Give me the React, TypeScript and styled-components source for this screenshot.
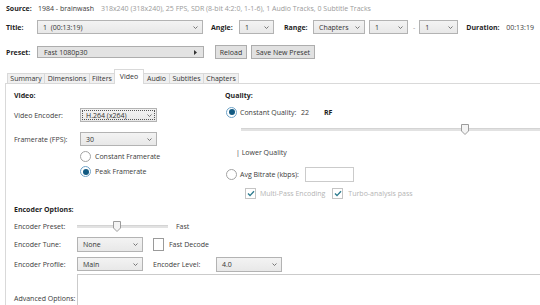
import React from "react";
import styled, { createGlobalStyle } from "styled-components";

const GlobalStyle = createGlobalStyle`
  html, body { margin: 0; padding: 0; background: #ffffff; }
  body { font-family: "Open Sans", "Noto Sans", sans-serif; }
  #root { width: 540px; height: 305px; }
`;

const Window = styled.div`
  width: 540px;
  height: 305px;
  overflow: hidden;
  background: #ffffff;
  display: flex;
  flex-direction: column;
  font-family: "Open Sans", "Noto Sans", sans-serif;
  font-size: 7px;
  line-height: 1;
  color: #3a3a3a;
`;

const HeaderRow = styled.div<{ $h: number; $mt?: number }>`
  display: flex;
  align-items: center;
  flex-shrink: 0;
  height: ${(p) => p.$h}px;
  margin-top: ${(p) => p.$mt ?? 0}px;
  padding-left: 6px;
  white-space: nowrap;
`;

const Strong = styled.span<{ $w?: number; $ml?: number }>`
  font-weight: 700;
  color: #1f1f1f;
  flex-shrink: 0;
  width: ${(p) => (p.$w ? `${p.$w}px` : "auto")};
  margin-left: ${(p) => p.$ml ?? 0}px;
`;

const Text = styled.span<{ $ml?: number; $w?: number; $muted?: boolean; $dim?: boolean }>`
  flex-shrink: 0;
  margin-left: ${(p) => p.$ml ?? 0}px;
  width: ${(p) => (p.$w ? `${p.$w}px` : "auto")};
  color: ${(p) => (p.$muted ? "#9a9a9a" : p.$dim ? "#b4b4b4" : "#3a3a3a")};
  white-space: nowrap;
`;

const Combo = styled.div<{ $w: number; $h?: number; $ml?: number; $focus?: boolean }>`
  box-sizing: border-box;
  position: relative;
  flex-shrink: 0;
  width: ${(p) => p.$w}px;
  height: ${(p) => p.$h ?? 14}px;
  margin-left: ${(p) => p.$ml ?? 0}px;
  display: flex;
  align-items: center;
  justify-content: space-between;
  padding: 0 4px 0 5px;
  border: 1px solid #b3b3b3;
  background: linear-gradient(#f3f3f3, #e8e8e8);
  color: #333;
  outline: ${(p) => (p.$focus ? "1px dotted #555" : "none")};
  outline-offset: -3px;
`;

const Chevron = () => (
  <svg width="5" height="3" viewBox="0 0 5 3">
    <path d="M0.5 0.5 L2.5 2.5 L4.5 0.5" fill="none" stroke="#6a6a6a" strokeWidth="0.9" />
  </svg>
);

const PresetBox = styled.div`
  box-sizing: border-box;
  flex-shrink: 0;
  width: 167px;
  height: 12px;
  margin-left: 0;
  display: flex;
  align-items: center;
  justify-content: space-between;
  padding: 0 6px 0 6px;
  border: 1px solid #adadad;
  background: #e3e3e3;
  color: #333;
`;

const Button = styled.div<{ $w: number; $ml?: number }>`
  box-sizing: border-box;
  flex-shrink: 0;
  width: ${(p) => p.$w}px;
  height: 14px;
  margin-left: ${(p) => p.$ml ?? 0}px;
  display: flex;
  align-items: center;
  justify-content: center;
  border: 1px solid #adadad;
  background: #e1e1e1;
  color: #333;
`;

const TabBar = styled.div`
  display: flex;
  align-items: flex-start;
  flex-shrink: 0;
  height: 15px;
  margin-top: 10px;
  margin-bottom: -1px;
  padding-left: 7px;
  position: relative;
  z-index: 1;
`;

const Tab = styled.div<{ $w: number; $active?: boolean }>`
  box-sizing: border-box;
  width: ${(p) => p.$w}px;
  height: ${(p) => (p.$active ? 15 : 10)}px;
  margin-top: ${(p) => (p.$active ? 0 : 4)}px;
  display: flex;
  align-items: center;
  justify-content: center;
  padding-bottom: ${(p) => (p.$active ? 2 : 0)}px;
  border: 1px solid #d9d9d9;
  border-bottom: none;
  margin-right: -1px;
  background: ${(p) => (p.$active ? "#ffffff" : "#f0f0f0")};
  color: #333;
`;

const Panel = styled.div`
  flex: 1;
  margin-left: 5px;
  border-top: 1px solid #d9d9d9;
  border-left: 1px solid #d9d9d9;
  padding-left: 8px;
  display: flex;
  flex-direction: column;
  min-height: 0;
`;

const TopGrid = styled.div`
  display: grid;
  grid-template-columns: 211px 1fr;
  align-items: start;
`;

const Column = styled.div`
  display: flex;
  flex-direction: column;
`;

const Row = styled.div<{ $h: number; $mt?: number; $pl?: number }>`
  display: flex;
  align-items: center;
  flex-shrink: 0;
  height: ${(p) => p.$h}px;
  margin-top: ${(p) => p.$mt ?? 0}px;
  padding-left: ${(p) => p.$pl ?? 0}px;
  white-space: nowrap;
`;

const RadioCircle = styled.span<{ $checked?: boolean; $ml?: number }>`
  box-sizing: border-box;
  flex-shrink: 0;
  width: 11px;
  height: 11px;
  margin-left: ${(p) => p.$ml ?? 0}px;
  border-radius: 50%;
  border: 1px solid ${(p) => (p.$checked ? "#6fa3c8" : "#a3a3a3")};
  background: #fff;
  display: inline-flex;
  align-items: center;
  justify-content: center;
  &::after {
    content: "";
    width: 6px;
    height: 6px;
    border-radius: 50%;
    background: ${(p) => (p.$checked ? "#115a82" : "transparent")};
  }
`;

const CheckBox = styled.span<{ $ml?: number; $disabled?: boolean; $h?: number }>`
  box-sizing: border-box;
  flex-shrink: 0;
  width: 11px;
  height: ${(p) => p.$h ?? 11}px;
  margin-left: ${(p) => p.$ml ?? 0}px;
  border: 1px solid ${(p) => (p.$disabled ? "#c4c4c4" : "#9a9a9a")};
  background: #fff;
  display: inline-flex;
  align-items: center;
  justify-content: center;
`;

const Check = () => (
  <svg width="8" height="7" viewBox="0 0 8 7">
    <path d="M1 3.6 L3 5.6 L7 1.2" fill="none" stroke="#2e7c8f" strokeWidth="1.4" />
  </svg>
);

const SliderTrack = styled.div<{ $w?: number; $ml?: number }>`
  position: relative;
  flex: ${(p) => (p.$w ? "0 0 auto" : "1")};
  width: ${(p) => (p.$w ? `${p.$w}px` : "auto")};
  margin-left: ${(p) => p.$ml ?? 0}px;
  height: 3px;
  background: #e2e2e2;
  border-top: 1px solid #d4d4d4;
  box-sizing: border-box;
`;

const ThumbWrap = styled.div<{ $x: number }>`
  position: absolute;
  left: ${(p) => p.$x - 4}px;
  top: -5px;
  width: 8px;
  height: 11px;
  display: flex;
`;

const Thumb = ({ x }: { x: number }) => (
  <ThumbWrap $x={x}>
    <svg width="8" height="11" viewBox="0 0 8 11">
      <path d="M0.5 0.5 H7.5 V7 L4 10.5 L0.5 7 Z" fill="#f4f4f4" stroke="#9c9c9c" strokeWidth="1" />
    </svg>
  </ThumbWrap>
);

const InputBox = styled.div<{ $w: number; $h: number; $ml?: number }>`
  box-sizing: border-box;
  flex-shrink: 0;
  width: ${(p) => p.$w}px;
  height: ${(p) => p.$h}px;
  margin-left: ${(p) => p.$ml ?? 0}px;
  border: 1px solid #cbcbcb;
  background: #fff;
`;

const AdvancedRow = styled.div`
  display: flex;
  align-items: flex-start;
  flex: 1;
  min-height: 0;
`;

const AdvLabel = styled.span`
  width: 63px;
  flex-shrink: 0;
  margin-top: 21px;
  white-space: nowrap;
  color: #3a3a3a;
`;

const AdvBox = styled.div`
  box-sizing: border-box;
  flex: 1;
  height: 60px;
  margin-right: -10px;
  border: 1px solid #cbcbcb;
  background: #fff;
`;

const PresetArrow = () => (
  <svg width="3" height="5" viewBox="0 0 3 5">
    <path d="M0 0 L3 2.5 L0 5 Z" fill="#333" />
  </svg>
);

const tabs: [string, number][] = [
  ["Summary", 38],
  ["Dimensions", 46],
  ["Filters", 26],
  ["Video", 30],
  ["Audio", 27],
  ["Subtitles", 35],
  ["Chapters", 36],
];

export default function App() {
  return (
    <>
      <GlobalStyle />
      <Window>
        <HeaderRow $h={16}>
          <Strong $w={32}>Source:</Strong>
          <Text>1984 - brainwash</Text>
          <Text $ml={7} $muted>
            318x240 (318x240), 25 FPS, SDR (8-bit 4:2:0, 1-1-6), 1 Audio Tracks, 0 Subtitle Tracks
          </Text>
        </HeaderRow>

        <HeaderRow $h={14} $mt={4}>
          <Strong $w={31}>Title:</Strong>
          <Combo $w={166}>
            <span>1&nbsp;&nbsp;(00:13:19)</span>
            <Chevron />
          </Combo>
          <Strong $ml={8} $w={28}>Angle:</Strong>
          <Combo $w={35}>
            <span>1</span>
            <Chevron />
          </Combo>
          <Strong $ml={10} $w={29}>Range:</Strong>
          <Combo $w={52}>
            <span>Chapters</span>
            <Chevron />
          </Combo>
          <Combo $w={39} $ml={4}>
            <span>1</span>
            <Chevron />
          </Combo>
          <Text $ml={5} $muted>-</Text>
          <Combo $w={39} $ml={4}>
            <span>1</span>
            <Chevron />
          </Combo>
          <Strong $ml={8} $w={40}>Duration:</Strong>
          <Text>00:13:19</Text>
        </HeaderRow>

        <HeaderRow $h={14} $mt={11}>
          <Strong $w={31}>Preset:</Strong>
          <PresetBox>
            <span>Fast 1080p30</span>
            <PresetArrow />
          </PresetBox>
          <Button $w={32} $ml={11}>Reload</Button>
          <Button $w={64} $ml={4}>Save New Preset</Button>
        </HeaderRow>

        <TabBar>
          {tabs.map(([name, w]) => (
            <Tab key={name} $w={w} $active={name === "Video"}>
              {name}
            </Tab>
          ))}
        </TabBar>

        <Panel>
          <TopGrid>
            <Column>
              <Row $h={22}>
                <Strong>Video:</Strong>
              </Row>
              <Row $h={18}>
                <Text $w={66}>Video Encoder:</Text>
                <Combo $w={77} $focus>
                  <span>H.264 (x264)</span>
                  <Chevron />
                </Combo>
              </Row>
              <Row $h={18} $mt={6}>
                <Text $w={66}>Framerate (FPS):</Text>
                <Combo $w={77}>
                  <span>30</span>
                  <Chevron />
                </Combo>
              </Row>
              <Row $h={15} $mt={1} $pl={66}>
                <RadioCircle />
                <Text $ml={4}>Constant Framerate</Text>
              </Row>
              <Row $h={15} $pl={66}>
                <RadioCircle $checked />
                <Text $ml={4}>Peak Framerate</Text>
              </Row>
            </Column>

            <Column>
              <Row $h={22}>
                <Strong>Quality:</Strong>
              </Row>
              <Row $h={12}>
                <RadioCircle $checked $ml={1} />
                <Text $ml={3} $w={61}>Constant Quality:</Text>
                <Text $w={23}>22</Text>
                <Strong>RF</Strong>
              </Row>
              <Row $h={22}>
                <SliderTrack $ml={16}>
                  <Thumb x={224} />
                </SliderTrack>
              </Row>
              <Row $h={24}>
                <Text $ml={11}>| Lower Quality</Text>
              </Row>
              <Row $h={20}>
                <RadioCircle $ml={1} />
                <Text $ml={3} $w={65}>Avg Bitrate (kbps):</Text>
                <InputBox $w={49} $h={15} />
              </Row>
              <Row $h={18}>
                <CheckBox $ml={20} $disabled>
                  <Check />
                </CheckBox>
                <Text $ml={4} $dim>Multi-Pass Encoding</Text>
                <CheckBox $ml={7} $disabled>
                  <Check />
                </CheckBox>
                <Text $ml={5} $dim>Turbo-analysis pass</Text>
              </Row>
            </Column>
          </TopGrid>

          <Row $h={14}>
            <Strong>Encoder Options:</Strong>
          </Row>
          <Row $h={20}>
            <Text $w={63}>Encoder Preset:</Text>
            <SliderTrack $w={91}>
              <Thumb x={40} />
            </SliderTrack>
            <Text $ml={8}>Fast</Text>
          </Row>
          <Row $h={17}>
            <Text $w={63}>Encoder Tune:</Text>
            <Combo $w={66} $h={15}>
              <span>None</span>
              <Chevron />
            </Combo>
            <CheckBox $ml={10} $h={13} />
            <Text $ml={5}>Fast Decode</Text>
          </Row>
          <Row $h={20} $mt={1}>
            <Text $w={63}>Encoder Profile:</Text>
            <Combo $w={66}>
              <span>Main</span>
              <Chevron />
            </Combo>
            <Text $ml={10} $w={63}>Encoder Level:</Text>
            <Combo $w={66} $h={15}>
              <span>4.0</span>
              <Chevron />
            </Combo>
          </Row>
          <AdvancedRow>
            <AdvLabel>Advanced Options:</AdvLabel>
            <AdvBox />
          </AdvancedRow>
        </Panel>
      </Window>
    </>
  );
}
